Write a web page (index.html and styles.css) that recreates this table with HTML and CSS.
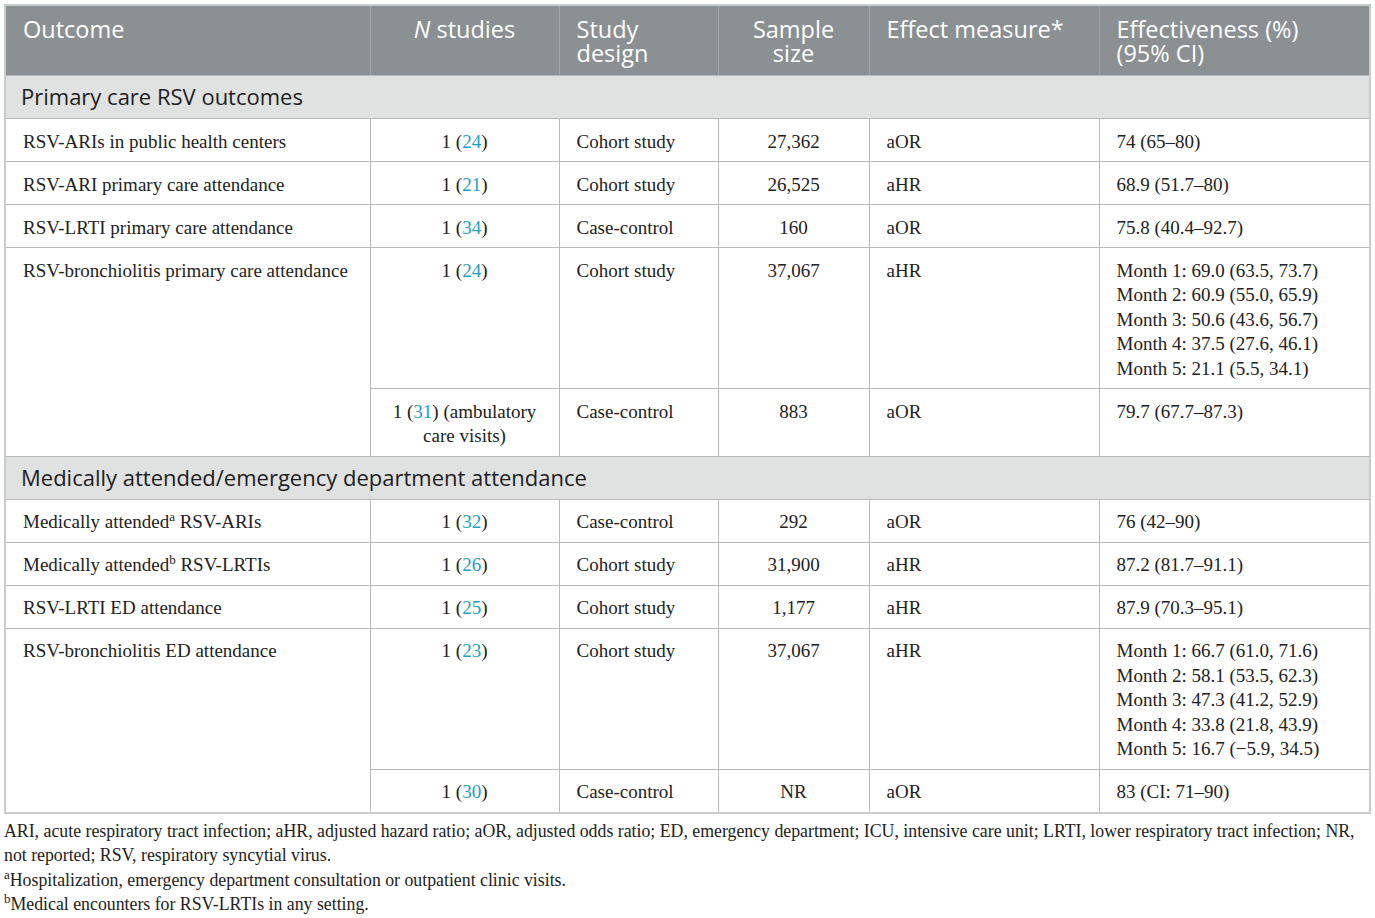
FILE: index.html
```html
<!DOCTYPE html>
<html lang="en">
<head>
<meta charset="utf-8">
<title>RSV outcomes table</title>
<link rel="stylesheet" href="styles.css">
</head>
<body>
<div class="wrap">
<table class="data">
<colgroup>
<col class="c1"><col class="c2"><col class="c3"><col class="c4"><col class="c5"><col class="c6">
</colgroup>
<thead>
<tr>
<th class="l">Outcome</th>
<th class="c"><i>N</i> studies</th>
<th class="l">Study<br>design</th>
<th class="c">Sample<br>size</th>
<th class="l">Effect measure*</th>
<th class="l">Effectiveness (%)<br>(95% CI)</th>
</tr>
</thead>
<tbody>
<tr class="sec"><td colspan="6">Primary care RSV outcomes</td></tr>
<tr>
<td>RSV-ARIs in public health centers</td>
<td class="c">1 (<a>24</a>)</td>
<td>Cohort study</td>
<td class="c">27,362</td>
<td>aOR</td>
<td>74 (65–80)</td>
</tr>
<tr>
<td>RSV-ARI primary care attendance</td>
<td class="c">1 (<a>21</a>)</td>
<td>Cohort study</td>
<td class="c">26,525</td>
<td>aHR</td>
<td>68.9 (51.7–80)</td>
</tr>
<tr>
<td>RSV-LRTI primary care attendance</td>
<td class="c">1 (<a>34</a>)</td>
<td>Case-control</td>
<td class="c">160</td>
<td>aOR</td>
<td>75.8 (40.4–92.7)</td>
</tr>
<tr>
<td rowspan="2">RSV-bronchiolitis primary care attendance</td>
<td class="c">1 (<a>24</a>)</td>
<td>Cohort study</td>
<td class="c">37,067</td>
<td>aHR</td>
<td>Month 1: 69.0 (63.5, 73.7)<br>Month 2: 60.9 (55.0, 65.9)<br>Month 3: 50.6 (43.6, 56.7)<br>Month 4: 37.5 (27.6, 46.1)<br>Month 5: 21.1 (5.5, 34.1)</td>
</tr>
<tr class="sub">
<td class="c">1 (<a>31</a>) (ambulatory care visits)</td>
<td>Case-control</td>
<td class="c">883</td>
<td>aOR</td>
<td class="last">79.7 (67.7–87.3)</td>
</tr>
<tr class="sec"><td colspan="6">Medically attended/emergency department attendance</td></tr>
<tr>
<td>Medically attended<sup>a</sup> RSV-ARIs</td>
<td class="c">1 (<a>32</a>)</td>
<td>Case-control</td>
<td class="c">292</td>
<td>aOR</td>
<td>76 (42–90)</td>
</tr>
<tr>
<td>Medically attended<sup>b</sup> RSV-LRTIs</td>
<td class="c">1 (<a>26</a>)</td>
<td>Cohort study</td>
<td class="c">31,900</td>
<td>aHR</td>
<td>87.2 (81.7–91.1)</td>
</tr>
<tr>
<td>RSV-LRTI ED attendance</td>
<td class="c">1 (<a>25</a>)</td>
<td>Cohort study</td>
<td class="c">1,177</td>
<td>aHR</td>
<td>87.9 (70.3–95.1)</td>
</tr>
<tr>
<td rowspan="2">RSV-bronchiolitis ED attendance</td>
<td class="c">1 (<a>23</a>)</td>
<td>Cohort study</td>
<td class="c">37,067</td>
<td>aHR</td>
<td>Month 1: 66.7 (61.0, 71.6)<br>Month 2: 58.1 (53.5, 62.3)<br>Month 3: 47.3 (41.2, 52.9)<br>Month 4: 33.8 (21.8, 43.9)<br>Month 5: 16.7 (−5.9, 34.5)</td>
</tr>
<tr class="sub">
<td class="c">1 (<a>30</a>)</td>
<td>Case-control</td>
<td class="c">NR</td>
<td>aOR</td>
<td class="last">83 (CI: 71–90)</td>
</tr>
</tbody>
</table>
<div class="notes">
<p>ARI, acute respiratory tract infection; aHR, adjusted hazard ratio; aOR, adjusted odds ratio; ED, emergency department; ICU, intensive care unit; LRTI, lower respiratory tract infection; NR, not reported; RSV, respiratory syncytial virus.</p>
<p><sup>a</sup>Hospitalization, emergency department consultation or outpatient clinic visits.</p>
<p><sup>b</sup>Medical encounters for RSV-LRTIs in any setting.</p>
</div>
</div>
</body>
</html>
```

FILE: styles.css
```css
html, body {
  margin: 0;
  padding: 0;
  background: #ffffff;
}

.wrap {
  padding: 4px 5px 0 4px;
}

.data {
  width: 1365px;
  border-collapse: collapse;
  table-layout: fixed;
  font-family: "Liberation Serif", "Times New Roman", serif;
  font-size: 19px;
  color: #222222;
  border: 2px solid #c9cccc;
}

.c1 { width: 365px; }
.c2 { width: 189px; }
.c3 { width: 159px; }
.c4 { width: 151px; }
.c5 { width: 230px; }
.c6 { width: 271px; }

.data th {
  background: #8b9092;
  color: #ffffff;
  font-family: "Open Sans", "DejaVu Sans", sans-serif;
  font-weight: 400;
  font-size: 23.5px;
  line-height: 24px;
  vertical-align: top;
  padding: 11px 17px 10px 17px;
  height: 48px;
  border-left: 1px solid #a1a5a7;
  border-bottom: 1px solid #b3b6b7;
}

.data th:first-child {
  border-left: none;
}

.data th.l { text-align: left; }
.data th.c { text-align: center; }

.data td {
  padding: 10.5px 17px 7px 17px;
  line-height: 24.5px;
  vertical-align: top;
  text-align: left;
  border: 1px solid #b9b9b9;
}

.data td.c { text-align: center; }

.data tr.sec td {
  background: #e0e1e1;
  font-family: "Open Sans", "DejaVu Sans", sans-serif;
  font-size: 22px;
  color: #1e1e1e;
  padding: 8px 15px 9px 15px;
  line-height: 25px;
  border-left: 2px solid #c9cccc;
  border-right: 2px solid #c9cccc;
}

.data a {
  color: #1e9fc0;
  text-decoration: none;
}

.data sup,
.notes sup {
  font-size: 13px;
  line-height: 0;
  vertical-align: 7px;
}

.notes {
  font-family: "Liberation Serif", "Times New Roman", serif;
  font-size: 17.8px;
  line-height: 24.5px;
  color: #222222;
  padding-top: 5px;
  width: 1366px;
}

.notes p {
  margin: 0;
}
```
